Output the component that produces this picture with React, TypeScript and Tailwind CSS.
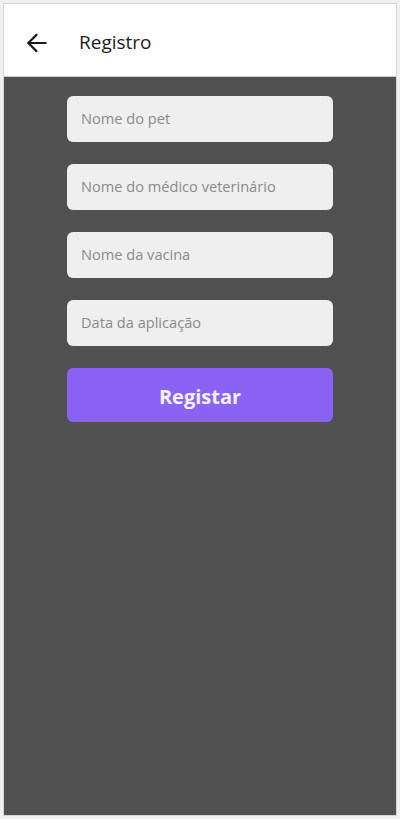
import React from "react";

const fields = [
  "Nome do pet",
  "Nome do médico veterinário",
  "Nome da vacina",
  "Data da aplicação",
];

export default function App() {
  return (
    <div
      className="w-[400px] h-[819px] bg-[#f0f0f0] p-[3px]"
      style={{ fontFamily: '"Open Sans", "Noto Sans", sans-serif' }}
    >
      <div className="h-[813px] border border-[#d4d4d4] flex flex-col bg-[#515151]">
        <div className="h-[73px] bg-white border-b border-[#cfcfcf] flex items-center shrink-0 pt-[5px] pl-[20px]">
          <svg width="26" height="26" viewBox="0 0 24 24" fill="none" stroke="#1a1a1a" strokeWidth="2" strokeLinecap="round" strokeLinejoin="round">
            <path d="M20 12H4" />
            <path d="M11.5 4.5 4 12l7.5 7.5" />
          </svg>
          <span className="ml-[29px] text-[19px] font-medium text-[#1c1c1c]">Registro</span>
        </div>
        <div className="flex flex-col items-center pt-[19px] gap-[22px]">
          {fields.map((f) => (
            <div
              key={f}
              className="w-[266px] h-[46px] rounded-[6px] bg-[#efefef] flex items-center pl-[14px] text-[14.6px] text-[#8a8a8a]"
            >
              {f}
            </div>
          ))}
          <div className="w-[266px] h-[54px] rounded-[6px] bg-[#8a63f5] flex items-center justify-center pt-[3px] text-[20px] font-bold text-[#f3f0ff]">
            Registar
          </div>
        </div>
      </div>
    </div>
  );
}
